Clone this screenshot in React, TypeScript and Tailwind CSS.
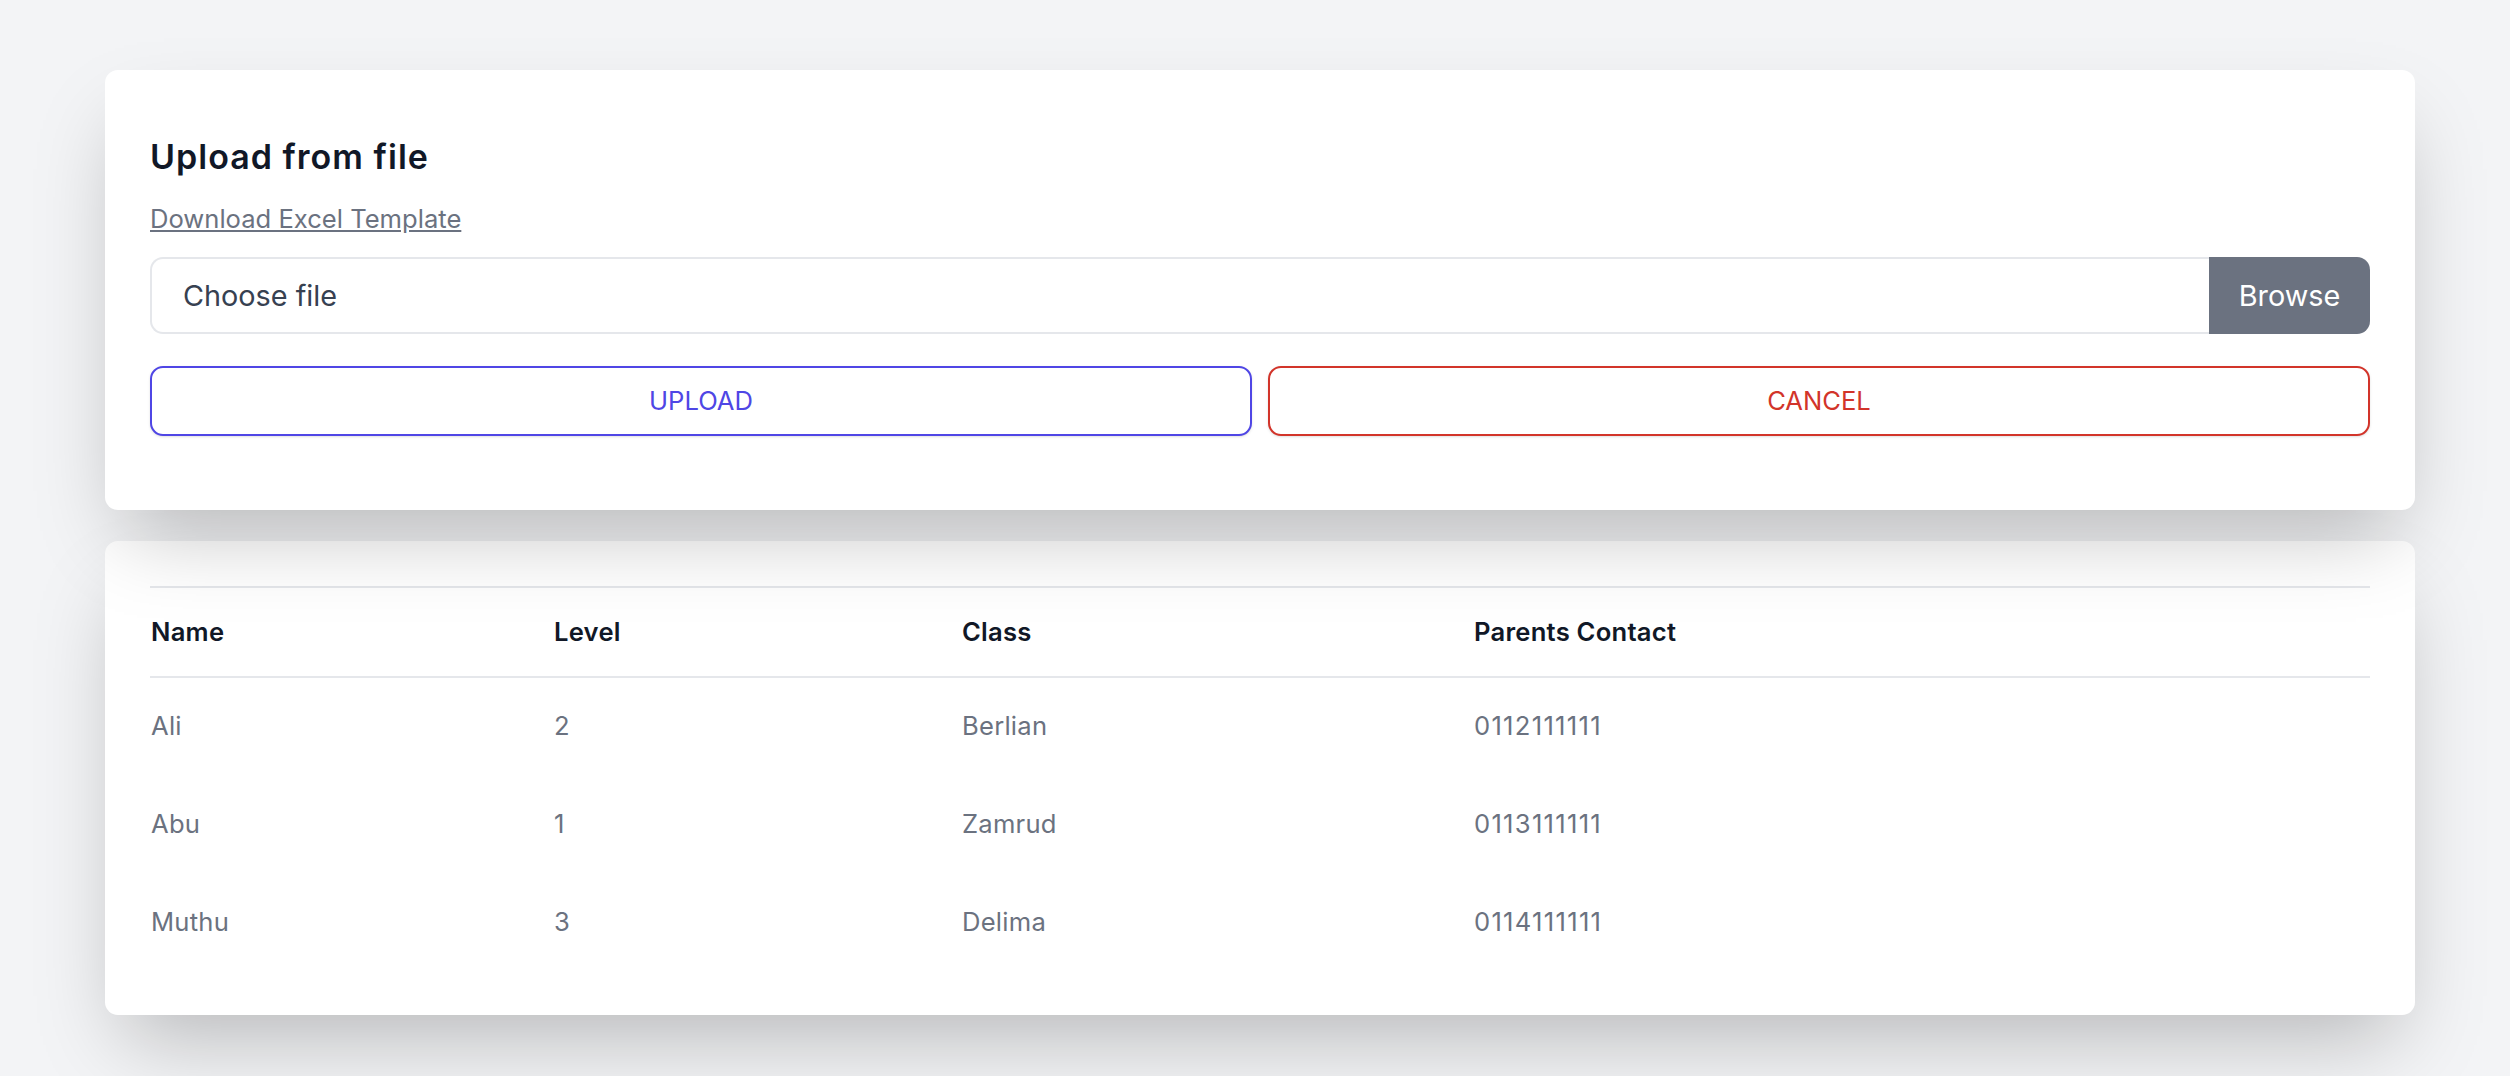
import React from 'react';

type Student = {
  name: string;
  level: number;
  className: string;
  contact: string;
};

const students: Student[] = [
  { name: 'Ali', level: 2, className: 'Berlian', contact: '0112111111' },
  { name: 'Abu', level: 1, className: 'Zamrud', contact: '0113111111' },
  { name: 'Muthu', level: 3, className: 'Delima', contact: '0114111111' },
];

const cardShadow = 'shadow-[0_40px_80px_-19px_rgba(0,0,0,0.25)]';

const UploadCard: React.FC = () => {
  return (
    <div className={`relative z-10 bg-white rounded-[13px] px-[45px] pt-[64px] pb-[74px] ${cardShadow}`}>
      <h2 className="text-[34px] leading-[45px] tracking-[0.03em] font-semibold text-[#111827]">Upload from file</h2>
      <a href="#" className="block mt-[21px] text-[25.6px] leading-[38px] text-[#6b7280] underline">
        Download Excel Template
      </a>
      <div className="flex h-[77px] mt-[19px]">
        <div className="flex-1 flex items-center border-2 border-r-0 border-[#e5e7eb] rounded-l-[13px] pl-[31px] text-[28.8px] text-[#374151]">
          Choose file
        </div>
        <button className="w-[161px] h-full bg-[#6b7280] text-white text-[28.8px] rounded-r-[13px]">Browse</button>
      </div>
      <div className="grid grid-cols-2 gap-[16px] mt-[32px]">
        <button className="h-[70px] rounded-[13px] border-2 border-[#4f46e5] text-[#4f46e5] text-[25.6px] bg-white shadow-sm">
          UPLOAD
        </button>
        <button className="h-[70px] rounded-[13px] border-2 border-[#d2342a] text-[#d2342a] text-[25.6px] bg-white shadow-sm">
          CANCEL
        </button>
      </div>
    </div>
  );
};

const StudentTable: React.FC = () => {
  return (
    <div className={`bg-white rounded-[13px] px-[45px] pt-[45px] pb-[44px] mt-[31px] ${cardShadow}`}>
      <table className="w-full table-fixed border-collapse text-left tracking-[0.015em]">
        <colgroup>
          <col className="w-[403px]" />
          <col className="w-[408px]" />
          <col className="w-[513px]" />
          <col />
        </colgroup>
        <thead>
          <tr className="border-y-2 border-[#e5e7eb] h-[90px]">
            <th className="font-semibold text-[25.6px] text-[#111827] py-0 pr-0 pl-[1px]">Name</th>
            <th className="font-semibold text-[25.6px] text-[#111827] py-0 pr-0 pl-[1px]">Level</th>
            <th className="font-semibold text-[25.6px] text-[#111827] py-0 pr-0 pl-[1px]">Class</th>
            <th className="font-semibold text-[25.6px] text-[#111827] p-0">Parents Contact</th>
          </tr>
        </thead>
        <tbody>
          {students.map((s) => (
            <tr key={s.name} className="h-[98px] text-[25.6px] text-[#6b7280]">
              <td className="py-0 pr-0 pl-[1px]">{s.name}</td>
              <td className="py-0 pr-0 pl-[1px]">{s.level}</td>
              <td className="py-0 pr-0 pl-[1px]">{s.className}</td>
              <td className="p-0 tracking-[0.05em]">{s.contact}</td>
            </tr>
          ))}
        </tbody>
      </table>
    </div>
  );
};

export default function App() {
  return (
    <div className="min-h-screen bg-[#f3f4f6] pl-[105px] pr-[95px] pt-[70px] font-['Inter',sans-serif]">
      <UploadCard />
      <StudentTable />
    </div>
  );
}
